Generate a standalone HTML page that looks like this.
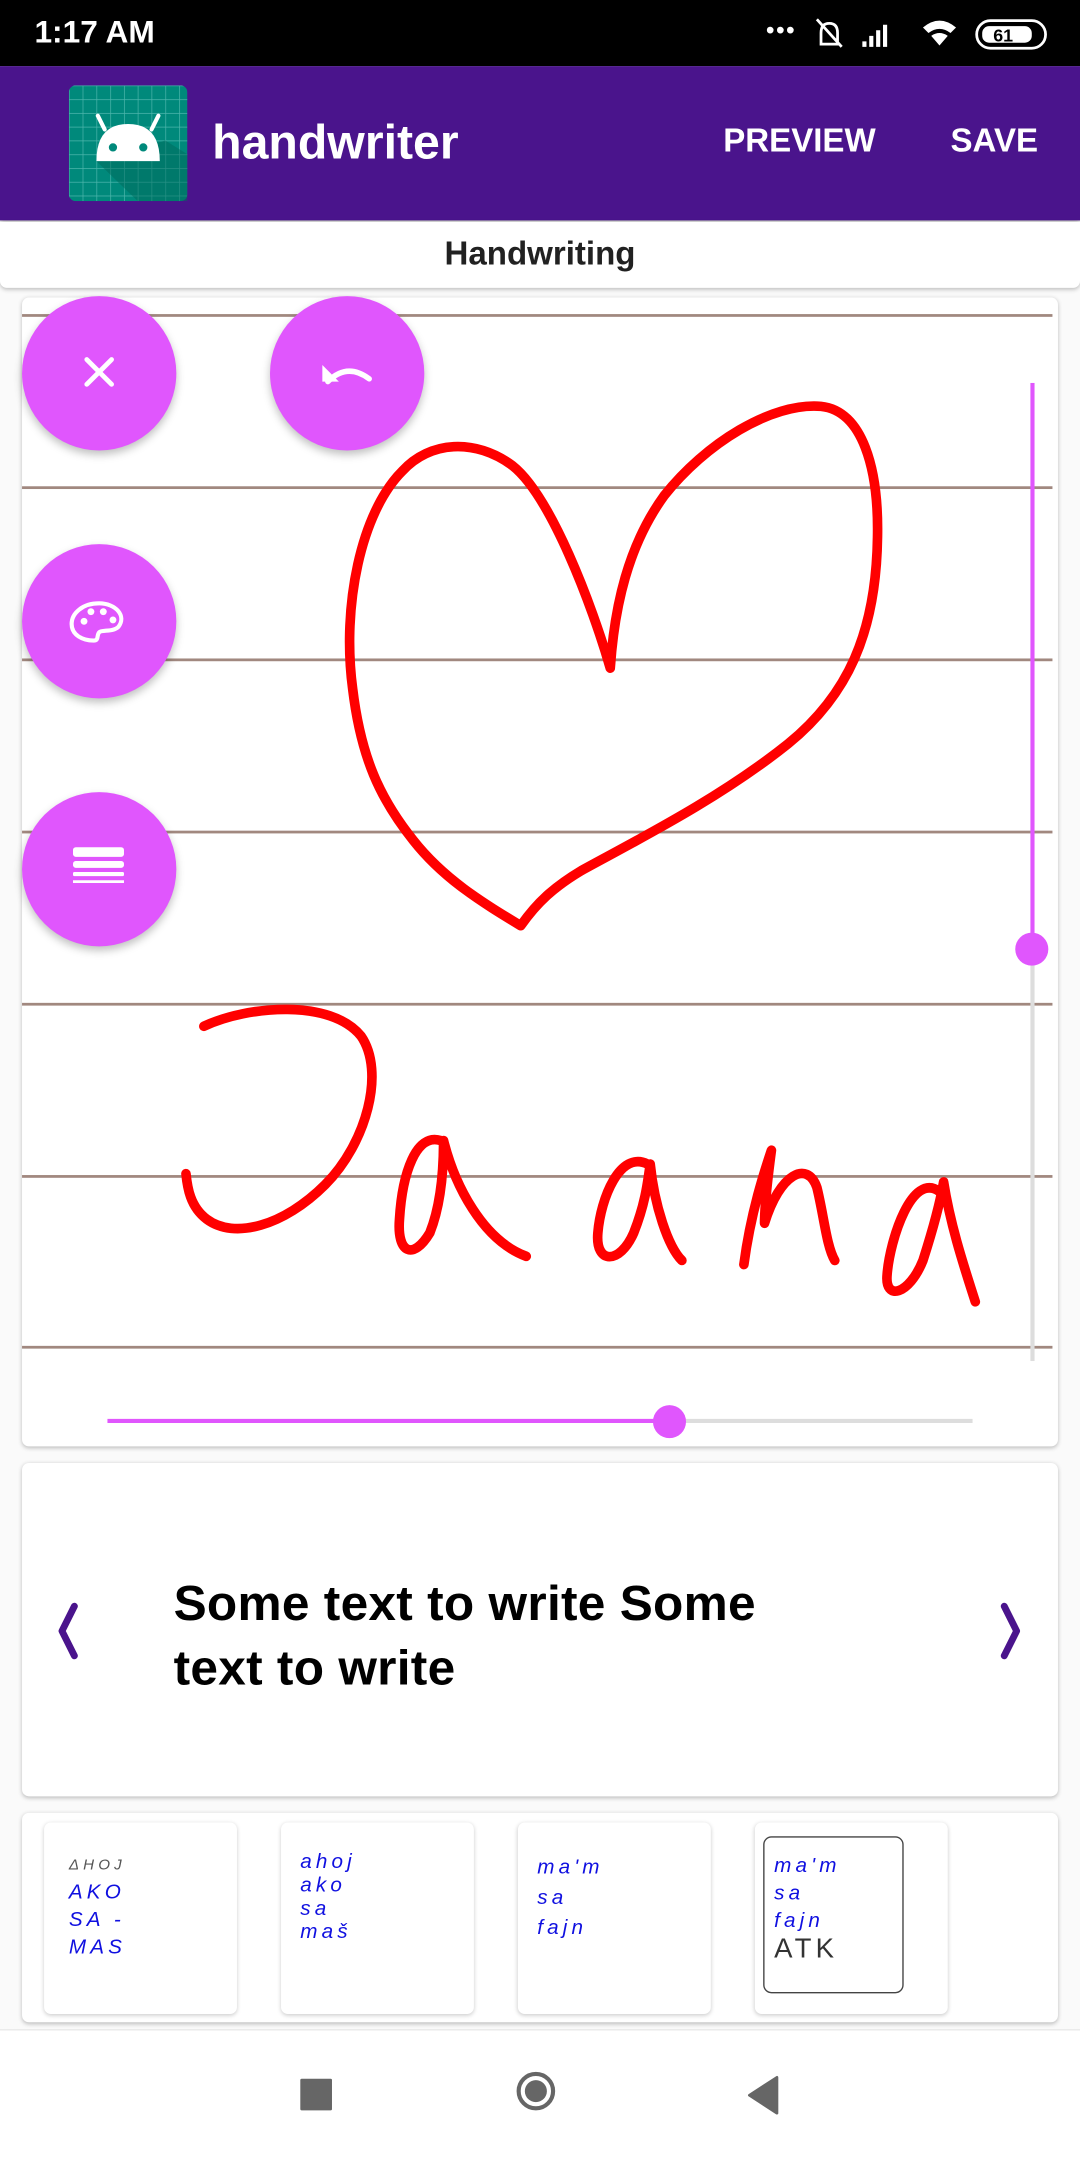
<!DOCTYPE html>
<html><head><meta charset="utf-8">
<style>
html,body{margin:0;padding:0;width:1080px;height:2160px;overflow:hidden;background:#fafafa;font-family:"Liberation Sans",sans-serif}
#s{position:absolute;left:0;top:0;width:784px;height:1568px;transform:scale(1.377551);transform-origin:0 0;background:#fafafa}
.a{position:absolute}
.card{position:absolute;background:#fff;border-radius:5px;box-shadow:0 1px 3px rgba(0,0,0,.25)}
.line{position:absolute;left:16px;width:748px;height:2px;background:#a1887f}
.fab{position:absolute;width:112px;height:112px;border-radius:50%;background:#e056fd;box-shadow:0 3px 6px rgba(0,0,0,.25)}
.fab svg{position:absolute;left:0;top:0}
.th{position:absolute;top:1323px;width:140px;height:139px;background:#fff;border-radius:5px;box-shadow:0 1px 3px rgba(0,0,0,.2);color:#1010e0;font-size:15px;line-height:20px;font-style:italic;letter-spacing:3px}
</style></head><body>
<div id="s">
<div class="a" style="left:0;top:0;width:784px;height:48px;background:#000"></div>
<div class="a" style="left:25px;top:10px;color:#fff;font-size:23px;font-weight:bold">1:17 AM</div>
<div class="a" style="left:556px;top:12px;color:#fff;font-size:18px;letter-spacing:1px">•••</div>
<svg class="a" style="left:590px;top:12px" width="180" height="26" viewBox="0 0 180 26">
<path d="M6 20 L6 12 Q6 5 12 5 Q18 5 18 12 L18 20 Z M3 2 L21 22" stroke="#fff" stroke-width="2" fill="none"/>
<path d="M36 22h3v-4h-3zM41 22h3v-8h-3zM46 22h3v-12h-3zM51 22h3v-16h-3z" fill="#fff"/>
<path d="M80 8 Q92 -2 104 8 L100 12 Q92 6 84 12Z M86 14 Q92 10 98 14 L92 21Z" fill="#fff"/>
<rect x="119" y="3" width="50" height="20" rx="10" fill="none" stroke="#fff" stroke-width="2"/>
<rect x="123" y="7" width="36" height="12" rx="5" fill="#fff"/>
<text x="131" y="18" font-size="13" font-family="Liberation Sans" fill="#000" font-weight="bold">61</text>
</svg>
<div class="a" style="left:0;top:48px;width:784px;height:112px;background:#4a148c;box-shadow:0 2px 4px rgba(0,0,0,.3)"></div>
<svg class="a" style="left:50px;top:62px" width="86" height="84" viewBox="0 0 86 84">
<defs><pattern id="g" width="10" height="10" patternUnits="userSpaceOnUse"><path d="M0 0H10M0 0V10" stroke="#4db6ac" stroke-width="1"/></pattern></defs>
<rect width="86" height="84" rx="5" fill="#00897b"/><rect width="86" height="84" rx="5" fill="url(#g)"/>
<path d="M20 55 L50 84 L86 84 L86 50 L70 40Z" fill="#00695c" opacity=".5"/>
<path d="M20 55 Q20 28 43 28 Q66 28 66 55Z" fill="#fff"/>
<path d="M26 32 L21 22 M60 32 L65 22" stroke="#fff" stroke-width="3" stroke-linecap="round"/>
<circle cx="32" cy="45" r="3" fill="#00897b"/><circle cx="54" cy="45" r="3" fill="#00897b"/>
</svg>
<div class="a" style="left:154px;top:84px;color:#fff;font-size:35px;font-weight:bold">handwriter</div>
<div class="a" style="left:525px;top:89px;color:#fff;font-size:24px;font-weight:bold">PREVIEW</div>
<div class="a" style="left:690px;top:89px;color:#fff;font-size:24px;font-weight:bold">SAVE</div>
<div class="card" style="left:0;top:161px;width:784px;height:48px;border-radius:0 0 5px 5px"></div>
<div class="a" style="left:0;top:171px;width:784px;text-align:center;font-size:24px;font-weight:bold;color:#212121">Handwriting</div>
<div class="card" style="left:16px;top:216px;width:752px;height:834px"></div>
<div class="line" style="top:228px"></div><div class="line" style="top:353px"></div><div class="line" style="top:478px"></div><div class="line" style="top:603px"></div><div class="line" style="top:728px"></div><div class="line" style="top:853px"></div><div class="line" style="top:977px"></div>
<div class="a" style="left:748px;top:278px;width:3px;height:411px;background:#e056fd"></div>
<div class="a" style="left:748px;top:689px;width:3px;height:299px;background:#ddd"></div>
<div class="a" style="left:737px;top:677px;width:24px;height:24px;border-radius:50%;background:#e056fd"></div>
<div class="a" style="left:78px;top:1030px;width:408px;height:3px;background:#e056fd"></div>
<div class="a" style="left:486px;top:1030px;width:220px;height:3px;background:#ddd"></div>
<div class="a" style="left:474px;top:1020px;width:24px;height:24px;border-radius:50%;background:#e056fd"></div>
<svg class="a" style="left:0;top:0" width="784" height="1100" viewBox="0 0 784 1100" fill="none" stroke="#f00" stroke-width="7" stroke-linecap="round" stroke-linejoin="round">
<path d="M443 485 C430 440 400 360 372 338 C345 318 312 320 292 342 C262 372 248 440 256 500 C262 550 276 580 300 610 C322 638 350 655 378 672 C390 655 402 644 422 632 C462 610 522 580 572 540 C615 505 636 460 637 390 C638 340 626 298 596 295 C560 292 512 322 482 360 C456 396 446 440 443 485"/>
<path d="M148 745 C180 730 240 725 262 752 C280 778 266 830 236 860 C206 890 170 900 150 885 C138 876 136 862 135 852"/>
<path d="M320 828 C302 822 292 852 290 885 C288 910 300 915 312 895 C320 875 322 850 322 828 C330 860 350 900 382 912"/>
<path d="M470 845 C450 835 436 870 434 895 C432 918 450 918 460 895 C468 875 470 860 472 845 C475 875 485 905 495 915"/>
<path d="M540 918 C545 880 555 850 560 835 C556 865 555 880 555 888 C566 852 586 842 593 862 C598 882 600 905 606 915"/>
<path d="M682 865 C662 850 646 900 644 925 C642 945 660 940 670 915 C678 890 683 870 685 858 C690 890 700 920 708 945"/>
</svg>
<div class="fab" style="left:16px;top:215px"><svg width="112" height="112"><path d="M47 46 L65 64 M65 46 L47 64" stroke="#fff" stroke-width="3.5" stroke-linecap="round"/></svg></div>
<div class="fab" style="left:196px;top:215px"><svg width="112" height="112"><path d="M42 62 Q56 48 72 60" stroke="#fff" stroke-width="4" fill="none" stroke-linecap="round"/><path d="M38 50 L38 62 L50 62Z" fill="#fff"/></svg></div>
<div class="fab" style="left:16px;top:395px"><svg width="112" height="112"><path d="M56 43 C44 43 36 50 36 58 C36 66 44 70 52 70 C56 70 54 66 56 64 C58 62 66 64 70 60 C76 52 68 43 56 43Z" stroke="#fff" stroke-width="3" fill="none"/><circle cx="45" cy="56" r="2.5" fill="#fff"/><circle cx="50" cy="49" r="2.5" fill="#fff"/><circle cx="59" cy="49" r="2.5" fill="#fff"/><circle cx="66" cy="55" r="2.5" fill="#fff"/></svg></div>
<div class="fab" style="left:16px;top:575px"><svg width="112" height="112"><rect x="37" y="40" width="37" height="7" rx="2" fill="#fff"/><rect x="37" y="50" width="37" height="5" rx="2" fill="#fff"/><rect x="37" y="58" width="37" height="3" rx="1" fill="#fff"/><rect x="37" y="64" width="37" height="2" fill="#fff"/></svg></div>
<div class="card" style="left:16px;top:1062px;width:752px;height:242px"></div>
<svg class="a" style="left:30px;top:1160px" width="40" height="50"><path d="M24 6 L15 24 L24 42" stroke="#4a148c" stroke-width="5" fill="none" stroke-linecap="round" stroke-linejoin="round"/></svg>
<svg class="a" style="left:715px;top:1160px" width="40" height="50"><path d="M14 6 L23 24 L14 42" stroke="#4a148c" stroke-width="5" fill="none" stroke-linecap="round" stroke-linejoin="round"/></svg>
<div class="a" style="left:126px;top:1140px;font-size:36px;line-height:47px;color:#000;font-weight:bold;letter-spacing:.2px">Some text to write Some<br>text to write</div>
<div class="card" style="left:16px;top:1316px;width:752px;height:152px"></div>
<div class="th" style="left:32px"><div style="padding:20px 0 0 18px"><span style="color:#555;font-size:11px">ΔHOJ</span><br>AKO<br>SA -<br>MAS</div></div>
<div class="th" style="left:204px"><div style="padding:20px 0 0 14px;line-height:17px">ahoj<br>ako<br>sa<br>maš</div></div>
<div class="th" style="left:376px"><div style="padding:22px 0 0 14px;line-height:22px">ma'm<br>sa<br>fajn</div></div>
<div class="th" style="left:548px"><div style="position:absolute;left:6px;top:10px;width:100px;height:112px;border:1.5px solid #444;border-radius:6px"></div><div style="padding:22px 0 0 14px;line-height:20px">ma'm<br>sa<br>fajn<br><span style="color:#333;font-size:20px;font-style:normal">ATK</span></div></div>
<div class="a" style="left:0;top:1473px;width:784px;height:95px;background:#fff;border-top:1px solid #e8e8e8"></div>
<div class="a" style="left:218px;top:1509px;width:23px;height:23px;background:#666;border-radius:1px"></div>
<div class="a" style="left:375px;top:1504px;width:28px;height:28px;border-radius:50%;border:3px solid #666;box-sizing:border-box"></div>
<div class="a" style="left:381px;top:1510px;width:16px;height:16px;border-radius:50%;background:#666"></div>
<svg class="a" style="left:540px;top:1506px" width="26" height="30"><path d="M24 2 L24 28 L4 15Z" fill="#666" stroke="#666" stroke-linejoin="round" stroke-width="2"/></svg>
</div>
</body></html>
